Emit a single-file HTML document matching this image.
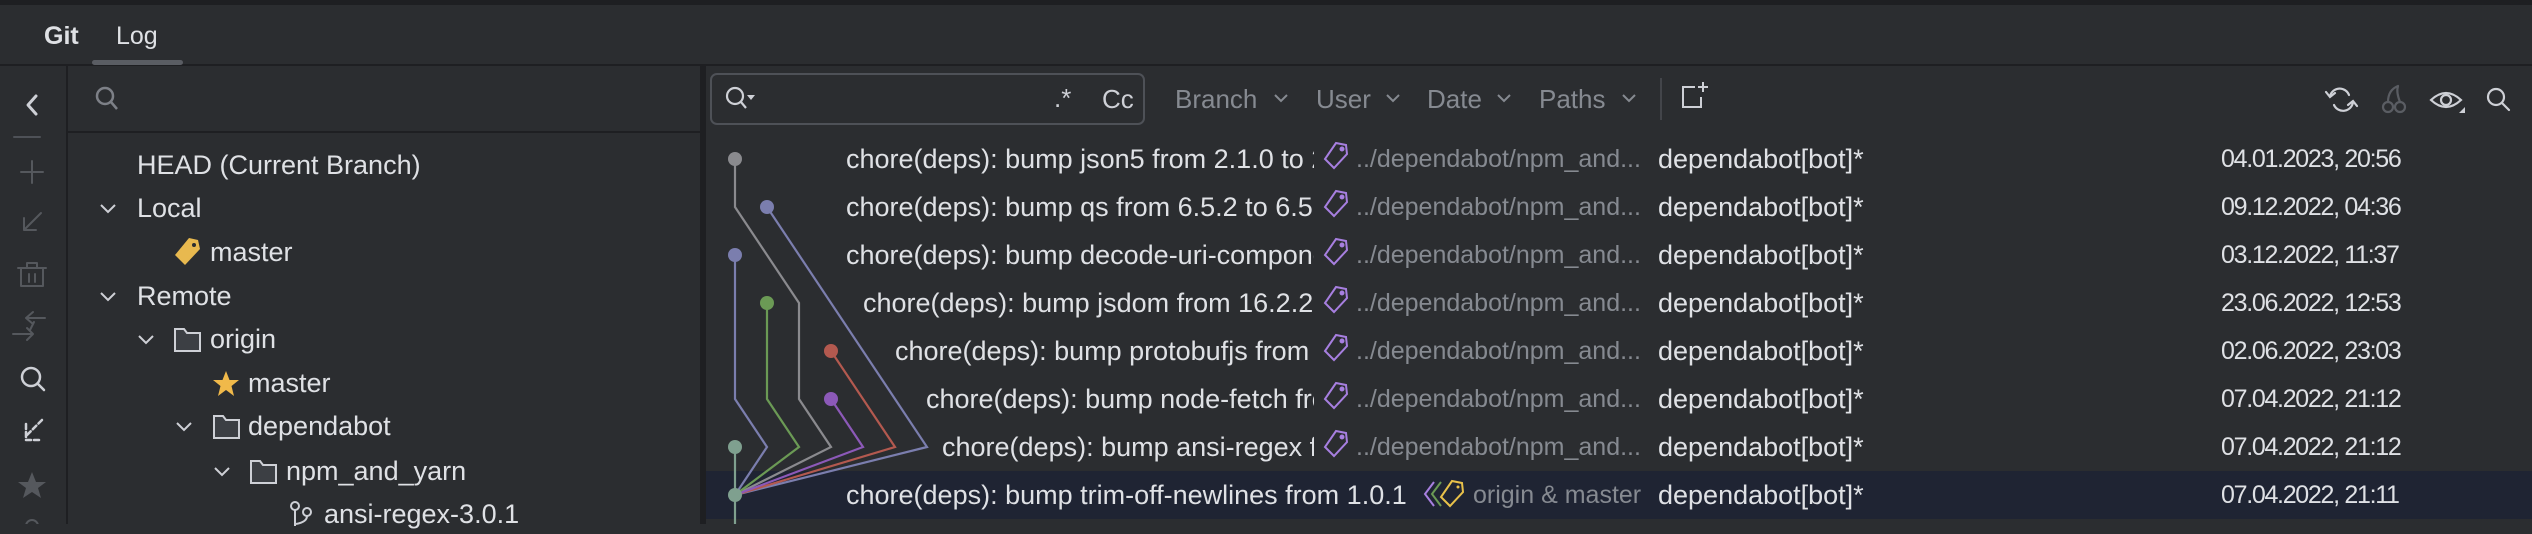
<!DOCTYPE html>
<html><head><meta charset="utf-8"><style>
*{margin:0;padding:0;box-sizing:border-box}
body{width:2532px;height:524px;background:#2b2d30;font-family:"Liberation Sans",sans-serif;color:#dfe1e5;position:relative;overflow:hidden;font-size:27px}
.a{position:absolute;white-space:nowrap}
.t{position:absolute;white-space:nowrap;line-height:40px;height:40px}
.g{color:#868a91;font-size:25px}
.d{font-size:25px;letter-spacing:-1.3px}
</style></head><body>
<div class="a" style="left:0;top:0;width:2532px;height:5px;background:#1e1f22"></div>
<div class="a" style="left:0;top:64px;width:2532px;height:2px;background:#1e1f22"></div>
<div class="t" style="left:44px;top:16px;font-weight:bold;color:#dfe1e5;font-size:25px">Git</div>
<div class="t" style="left:116px;top:16px;font-size:25px">Log</div>
<div class="a" style="left:92px;top:60px;width:91px;height:5px;border-radius:3px;background:#5a5d63"></div>
<div class="a" style="left:66px;top:66px;width:2px;height:458px;background:#1e1f22"></div>
<div class="a" style="left:700px;top:66px;width:6px;height:458px;background:#1e1f22"></div>
<div class="a" style="left:68px;top:131px;width:632px;height:2px;background:#1e1f22"></div>
<svg class="a" style="left:0;top:66px" width="66" height="458" fill="none" stroke-linecap="round" stroke-linejoin="round">
<g transform="translate(0,-66)">
<path d="M36 96 L28 105 L36 114" stroke="#ced0d6" stroke-width="3"/>
<path d="M14 137 H40" stroke="#4e5157" stroke-width="2"/>
<path d="M32 161 V183 M21 172 H43" stroke="#55585d" stroke-width="2"/>
<path d="M41 213 L24 230 M24 218 V230 H36" stroke="#55585d" stroke-width="2"/>
<path d="M18 268 H46 M27 268 V263 H37 V268 M21 268 V286 H43 V268 M29 274 V282 M35 274 V282" stroke="#55585d" stroke-width="2"/>
<path d="M45 318 H26 M33 312 L26 318 L33 324 M13 334 H33 M27 328 L33 334 L27 340 M34 322 L30 330" stroke="#55585d" stroke-width="2"/>
<circle cx="31" cy="377" r="9" stroke="#ced0d6" stroke-width="2.5"/><path d="M38 384 L44 390" stroke="#ced0d6" stroke-width="2.5"/>
<path d="M42 420 L27 435 M26 424 V440 M26 440 H41" stroke="#ced0d6" stroke-width="2.5" stroke-dasharray="5 3"/>
<path d="M32 472 L36 482 L46 482 L38 488 L41 498 L32 492 L23 498 L26 488 L18 482 L28 482 Z" fill="#55585d" stroke="none"/>
<circle cx="32" cy="526" r="6" stroke="#55585d" stroke-width="2"/>
</g></svg>
<svg class="a" style="left:92px;top:84px" width="30" height="30" fill="none" stroke="#7d8087" stroke-width="2.5"><circle cx="13" cy="12" r="8"/><path d="M19 18 L25 25"/></svg>
<div class="t" style="left:137px;top:145px">HEAD (Current Branch)</div>
<svg class="a" style="left:98px;top:198px" width="20" height="20" fill="none" stroke="#ced0d6" stroke-width="2"><path d="M3 7 L10 14 L17 7"/></svg>
<div class="t" style="left:137px;top:188px">Local</div>
<svg class="a" style="left:172px;top:236px" width="30" height="32"><path d="M17 2 L26 4 L28 13 L13 29 L3 19 Z" fill="#e8b94f"/><circle cx="22" cy="9" r="2" fill="#2b2d30"/></svg>
<div class="t" style="left:210px;top:232px">master</div>
<svg class="a" style="left:98px;top:286px" width="20" height="20" fill="none" stroke="#ced0d6" stroke-width="2"><path d="M3 7 L10 14 L17 7"/></svg>
<div class="t" style="left:137px;top:276px">Remote</div>
<svg class="a" style="left:136px;top:329px" width="20" height="20" fill="none" stroke="#ced0d6" stroke-width="2"><path d="M3 7 L10 14 L17 7"/></svg>
<svg class="a" style="left:173px;top:326px" width="30" height="28" fill="#3c3f44" stroke="#ced0d6" stroke-width="2"><path d="M2 3 H11 L14 7 H27 V25 H2 Z"/></svg>
<div class="t" style="left:210px;top:319px">origin</div>
<svg class="a" style="left:212px;top:370px" width="28" height="28"><path d="M14 1 L17.5 10 L27 10 L19.5 16 L22 26 L14 20 L6 26 L8.5 16 L1 10 L10.5 10 Z" fill="#f0b94a"/></svg>
<div class="t" style="left:248px;top:363px">master</div>
<svg class="a" style="left:174px;top:416px" width="20" height="20" fill="none" stroke="#ced0d6" stroke-width="2"><path d="M3 7 L10 14 L17 7"/></svg>
<svg class="a" style="left:212px;top:413px" width="30" height="28" fill="#3c3f44" stroke="#ced0d6" stroke-width="2"><path d="M2 3 H11 L14 7 H27 V25 H2 Z"/></svg>
<div class="t" style="left:248px;top:406px">dependabot</div>
<svg class="a" style="left:212px;top:461px" width="20" height="20" fill="none" stroke="#ced0d6" stroke-width="2"><path d="M3 7 L10 14 L17 7"/></svg>
<svg class="a" style="left:249px;top:458px" width="30" height="28" fill="#3c3f44" stroke="#ced0d6" stroke-width="2"><path d="M2 3 H11 L14 7 H27 V25 H2 Z"/></svg>
<div class="t" style="left:286px;top:451px">npm_and_yarn</div>
<svg class="a" style="left:288px;top:500px" width="28" height="28" fill="none" stroke="#ced0d6" stroke-width="2"><circle cx="7" cy="6" r="4"/><circle cx="19" cy="12" r="4"/><path d="M7 10 V26 M19 16 Q19 22 8 24"/></svg>
<div class="t" style="left:324px;top:494px">ansi-regex-3.0.1</div>
<div class="a" style="left:710px;top:73px;width:435px;height:52px;border:2px solid #4e5157;border-radius:7px"></div>
<svg class="a" style="left:724px;top:84px" width="36" height="30" fill="none" stroke="#ced0d6" stroke-width="2.2"><circle cx="11" cy="12" r="8"/><path d="M17 18 L22 24"/><path d="M23 11 H31 L27 16 Z" fill="#ced0d6" stroke="none"/></svg>
<div class="t" style="left:1054px;top:78px;color:#ced0d6;font-size:26px">.*</div>
<div class="t" style="left:1102px;top:79px;color:#ced0d6;font-size:26px">Cc</div>
<div class="t g" style="left:1175px;top:79px;font-size:26px">Branch</div>
<div class="t g" style="left:1316px;top:79px;font-size:26px">User</div>
<div class="t g" style="left:1427px;top:79px;font-size:26px">Date</div>
<div class="t g" style="left:1539px;top:79px;font-size:26px">Paths</div>
<svg class="a" style="left:1270px;top:90px" width="380" height="20" fill="none" stroke="#868a91" stroke-width="2"><path d="M5 5 L11 11 L17 5"/><path d="M117 5 L123 11 L129 5"/><path d="M228 5 L234 11 L240 5"/><path d="M353 5 L359 11 L365 5"/></svg>
<div class="a" style="left:1660px;top:78px;width:2px;height:42px;background:#43454a"></div>
<svg class="a" style="left:1680px;top:80px" width="34" height="32" fill="none" stroke="#ced0d6" stroke-width="2"><path d="M15 7 H3 V27 H21 V17"/><path d="M23 2 V12 M18 7 H28"/></svg>
<svg class="a" style="left:2322px;top:82px" width="200" height="36" fill="none" stroke-width="2.2" stroke-linecap="round">
<path d="M8 14 A10 10 0 0 1 27 13 M31 20 A10 10 0 0 1 12 23" stroke="#ced0d6"/><path d="M4 10 L8 15 L13 11 M35 24 L31 19 L26 23" stroke="#ced0d6"/>
<circle cx="66" cy="25" r="5" stroke="#5a5d63"/><circle cx="78" cy="25" r="5" stroke="#5a5d63"/><path d="M66 20 Q66 8 76 4 M78 20 Q74 10 76 4" stroke="#5a5d63"/>
<path d="M109 18 Q124 4 139 18 Q124 32 109 18 Z" stroke="#ced0d6"/><circle cx="124" cy="18" r="5" stroke="#ced0d6"/><path d="M137 31 L143 25 V31 Z" fill="#ced0d6" stroke="none"/>
<circle cx="174" cy="15" r="8" stroke="#ced0d6"/><path d="M180 21 L187 28" stroke="#ced0d6"/>
</svg>
<div class="a" style="left:706px;top:471px;width:1826px;height:48px;background:#1f2433"></div>
<svg class="a" style="left:706px;top:130px" width="260" height="394" fill="none" stroke-width="2.2">
<g transform="translate(-706,-130)">
<path d="M735 159 V207 L799 303 V399 L831 447 L735 495" stroke="#8a8a8e"/>
<path d="M767 207 L927 447 L735 495" stroke="#7b7eae"/>
<path d="M735 255 V399 L767 447 L735 495" stroke="#7b7eae"/>
<path d="M767 303 V399 L799 447 L735 495" stroke="#6b9a55"/>
<path d="M831 351 L895 447 L735 495" stroke="#b3594f"/>
<path d="M831 399 L863 447 L735 495" stroke="#8c59b8"/>
<path d="M735 447 V524" stroke="#7fa08f"/>
<ellipse cx="735" cy="159" rx="7" ry="7" fill="#8a8a8e"/>
<ellipse cx="767" cy="207" rx="7" ry="7" fill="#7b7eae"/>
<ellipse cx="735" cy="255" rx="7" ry="7" fill="#7b7eae"/>
<ellipse cx="767" cy="303" rx="7" ry="7" fill="#6b9a55"/>
<ellipse cx="831" cy="351" rx="7" ry="7" fill="#b3594f"/>
<ellipse cx="831" cy="399" rx="7" ry="7" fill="#8c59b8"/>
<ellipse cx="735" cy="447" rx="7" ry="7" fill="#7fa08f"/>
<ellipse cx="735" cy="495" rx="7" ry="7" fill="#7fa08f"/>
</g></svg>
<div class="t" style="left:846px;top:139px;width:468px;overflow:hidden">chore(deps): bump json5 from 2.1.0 to 2.2.2</div>
<div class="t" style="left:846px;top:187px;width:468px;overflow:hidden">chore(deps): bump qs from 6.5.2 to 6.5.3</div>
<div class="t" style="left:846px;top:235px;width:468px;overflow:hidden">chore(deps): bump decode-uri-component</div>
<div class="t" style="left:863px;top:283px;width:451px;overflow:hidden">chore(deps): bump jsdom from 16.2.2 to</div>
<div class="t" style="left:895px;top:331px;width:419px;overflow:hidden">chore(deps): bump protobufjs from 6.11</div>
<div class="t" style="left:926px;top:379px;width:388px;overflow:hidden">chore(deps): bump node-fetch from 2.6</div>
<div class="t" style="left:942px;top:427px;width:372px;overflow:hidden">chore(deps): bump ansi-regex from 3.0</div>
<div class="t" style="left:846px;top:475px;width:568px;overflow:hidden">chore(deps): bump trim-off-newlines from 1.0.1</div>
<svg class="a" style="left:1322px;top:140px" width="30" height="320" fill="none" stroke="#a77fe0" stroke-width="2">
<g id="tg"><path d="M14 3 L24 5 L25 14 L12 28 L3 19 Z"/><circle cx="20" cy="9" r="1.5" fill="#a77fe0"/></g>
<use href="#tg" y="48"/><use href="#tg" y="96"/><use href="#tg" y="144"/><use href="#tg" y="192"/><use href="#tg" y="240"/><use href="#tg" y="288"/>
</svg>
<svg class="a" style="left:1422px;top:478px" width="48" height="34" fill="none" stroke-width="2">
<path d="M12 4 L3 16 L12 28" stroke="#a77fe0"/><path d="M19 4 L10 16 L19 28" stroke="#6b9a55"/>
<path d="M30 3 L40 5 L41 14 L28 28 L19 19 Z" stroke="#e8c14a"/><circle cx="36" cy="9" r="1.5" fill="#e8c14a"/>
</svg>
<div class="t g" style="left:1356px;top:139px">../dependabot/npm_and...</div>
<div class="t g" style="left:1356px;top:187px">../dependabot/npm_and...</div>
<div class="t g" style="left:1356px;top:235px">../dependabot/npm_and...</div>
<div class="t g" style="left:1356px;top:283px">../dependabot/npm_and...</div>
<div class="t g" style="left:1356px;top:331px">../dependabot/npm_and...</div>
<div class="t g" style="left:1356px;top:379px">../dependabot/npm_and...</div>
<div class="t g" style="left:1356px;top:427px">../dependabot/npm_and...</div>
<div class="t g" style="left:1473px;top:475px">origin &amp; master</div>
<div class="t" style="left:1658px;top:139px">dependabot[bot]*</div>
<div class="t" style="left:1658px;top:187px">dependabot[bot]*</div>
<div class="t" style="left:1658px;top:235px">dependabot[bot]*</div>
<div class="t" style="left:1658px;top:283px">dependabot[bot]*</div>
<div class="t" style="left:1658px;top:331px">dependabot[bot]*</div>
<div class="t" style="left:1658px;top:379px">dependabot[bot]*</div>
<div class="t" style="left:1658px;top:427px">dependabot[bot]*</div>
<div class="t" style="left:1658px;top:475px">dependabot[bot]*</div>
<div class="t d" style="left:2221px;top:139px">04.01.2023, 20:56</div>
<div class="t d" style="left:2221px;top:187px">09.12.2022, 04:36</div>
<div class="t d" style="left:2221px;top:235px">03.12.2022, 11:37</div>
<div class="t d" style="left:2221px;top:283px">23.06.2022, 12:53</div>
<div class="t d" style="left:2221px;top:331px">02.06.2022, 23:03</div>
<div class="t d" style="left:2221px;top:379px">07.04.2022, 21:12</div>
<div class="t d" style="left:2221px;top:427px">07.04.2022, 21:12</div>
<div class="t d" style="left:2221px;top:475px">07.04.2022, 21:11</div>
</body></html>
